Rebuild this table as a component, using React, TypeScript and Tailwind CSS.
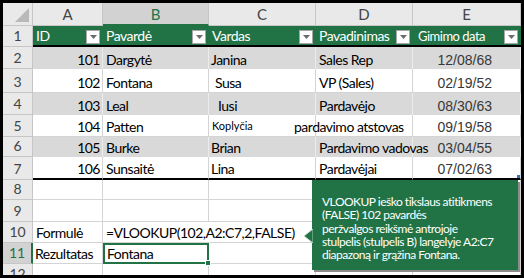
import React from 'react';

const cols = 'grid grid-cols-[30px_70px_106px_107px_97px_108px]';
const grid = 'border-r border-b border-[#d4d4d4]';

const Dropdown = () => (
  <span className="absolute right-[3px] top-[4px] flex h-[14px] w-[14px] items-center justify-center border border-[#a6a6a6] bg-white">
    <svg width="7" height="4" viewBox="0 0 7 4">
      <polygon points="0,0 7,0 3.5,4" fill="#6b6b6b" />
    </svg>
  </span>
);

const RowHead = ({ n, active }: { n: number; active?: boolean }) => (
  <div
    className={
      active
        ? 'flex items-end justify-center border-b border-r-2 border-b-[#c6c6c6] border-r-[#217346] bg-[#d2d2d2] pb-[2px] tracking-normal text-[#217346]'
        : 'flex items-end justify-center border-b border-r border-[#c6c6c6] bg-[#e9e9e9] pb-[2px] tracking-normal text-[#444]'
    }
  >
    {n}
  </div>
);

const people = [
  { id: 101, last: 'Dargytė', first: 'Janina', title: 'Sales Rep', date: '12/08/68', h: 'h-[22px]', cPad: 'pl-[2px]' },
  { id: 102, last: 'Fontana', first: 'Susa', title: 'VP (Sales)', date: '02/19/52', h: 'h-[24px]', cPad: 'pl-[6px]' },
  { id: 103, last: 'Leal', first: 'Iusi', title: 'Pardavėjo', date: '08/30/63', h: 'h-[22px]', cPad: 'pl-[9px]' },
  { id: 104, last: 'Patten', first: 'Koplyčia', title: 'pardavimo atstovas', date: '09/19/58', h: 'h-[22px]', cPad: 'pl-[3px]' },
  { id: 105, last: 'Burke', first: 'Brian', title: 'Pardavimo vadovas', date: '03/04/55', h: 'h-[20px]', cPad: 'pl-[2px]' },
  { id: 106, last: 'Sunsaitė', first: 'Lina', title: 'Pardavėjai', date: '07/02/63', h: 'h-[23px]', cPad: 'pl-[2px]' },
];

export default function App() {
  return (
    <div className="relative h-[278px] w-[524px] overflow-hidden border-[3px] border-black bg-white font-[Lato,'Liberation_Sans',sans-serif] text-[14px] leading-[16px] tracking-[-0.5px] text-black">
      {/* column letters */}
      <div className={`${cols} h-[23px]`}>
        <div className="relative border-b border-r border-[#c6c6c6] bg-[#e9e9e9]">
          <svg className="absolute bottom-[3px] right-[3px]" width="14" height="14" viewBox="0 0 14 14">
            <polygon points="14,0 14,14 0,14" fill="#b9b9b9" />
          </svg>
        </div>
        {['A', 'B', 'C', 'D', 'E'].map((c) => (
          <div
            key={c}
            className={
              c === 'B'
                ? 'flex items-center justify-center border-b-2 border-r border-b-[#217346] border-r-[#c6c6c6] bg-[#d2d2d2] text-[15px] tracking-normal text-[#217346]'
                : 'flex items-center justify-center border-b border-r border-[#c6c6c6] bg-[#e9e9e9] text-[15px] tracking-normal text-[#444]'
            }
          >
            {c}
          </div>
        ))}
      </div>

      {/* table header row */}
      <div className={`${cols} h-[21px]`}>
        <RowHead n={1} />
        {['ID', 'Pavardė', 'Vardas', 'Pavadinimas', 'Gimimo data'].map((t, i) => (
          <div
            key={t}
            className="relative flex items-end whitespace-nowrap border-b-2 border-b-black bg-[#217346] pb-[1px] pl-[3px] text-white"
          >
            <span className={i === 4 ? 'pl-[2px] text-[13px]' : ''}>{t}</span>
            <Dropdown />
          </div>
        ))}
      </div>

      {/* data rows */}
      {people.map((p, i) => {
        const band = i % 2 === 0 ? 'bg-[#d9d9d9] border-r border-[#ececec]' : `bg-white ${grid}`;
        const last = i === people.length - 1;
        const bottom = last ? 'border-b-2 border-b-black' : '';
        return (
          <div key={p.id} className={`${cols} ${p.h}`}>
            <RowHead n={i + 2} />
            <div className={`flex items-end justify-end whitespace-nowrap pb-[1px] pr-[2px] ${band} ${bottom}`}>{p.id}</div>
            <div className={`flex items-end whitespace-nowrap pb-[1px] pl-[3px] ${band} ${bottom}`}>{p.last}</div>
            <div className={`flex items-end whitespace-nowrap pb-[1px] ${p.cPad} ${band} ${bottom}`}>
              <span className={p.id === 104 ? 'pb-[1px] text-[11px] tracking-normal' : ''}>{p.first}</span>
            </div>
            <div className={`relative z-10 flex items-end whitespace-nowrap pb-[1px] pl-[3px] ${band} ${bottom}`}>
              <span className={p.id === 104 ? 'ml-[-25px]' : ''}>{p.title}</span>
            </div>
            <div
              className={`relative flex items-end justify-end whitespace-nowrap pb-[1px] pr-[28px] font-['Liberation_Sans',sans-serif] tracking-normal text-[#383838] ${band} ${bottom}`}
            >
              {p.date}
              {last && <span className="absolute bottom-0 right-0 h-[3px] w-[3px] bg-[#3c6fc2]" />}
            </div>
          </div>
        );
      })}

      {/* empty rows 8, 9 */}
      {[8, 9].map((n) => (
        <div key={n} className={`${cols} ${n === 8 ? 'h-[20px]' : 'h-[22px]'}`}>
          <RowHead n={n} />
          <div className={grid} />
          <div className={grid} />
          <div className={grid} />
          <div className={grid} />
          <div className={grid} />
        </div>
      ))}

      {/* formula row */}
      <div className={`${cols} h-[21px]`}>
        <RowHead n={10} />
        <div className={`flex items-end pb-[1px] pl-[3px] ${grid}`}>Formulė</div>
        <div className="relative z-10 flex items-end whitespace-nowrap border-b border-[#d4d4d4] pb-[1px] pl-[3px]">
          =VLOOKUP(102,A2:C7,2,FALSE)
        </div>
        <div className={grid} />
        <div className={grid} />
        <div className={grid} />
      </div>

      {/* result row */}
      <div className={`${cols} h-[21px]`}>
        <RowHead n={11} active />
        <div className={`flex items-end whitespace-nowrap pb-[1px] pl-[2px] ${grid}`}>Rezultatas</div>
        <div className="relative flex items-end border-2 border-[#217346] pb-0 pl-[2px]">
          Fontana
          <span className="absolute bottom-[-4px] right-[-4px] h-[6px] w-[6px] border border-white bg-[#217346]" />
        </div>
        <div className={grid} />
        <div className={grid} />
        <div className={grid} />
      </div>

      {/* row 12 (cut off) */}
      <div className={`${cols} h-[21px]`}>
        <RowHead n={12} />
        <div className={grid} />
        <div className={grid} />
        <div className={grid} />
        <div className={grid} />
        <div className={grid} />
      </div>

      {/* comment callout */}
      <div className="absolute left-[309px] top-[177px] z-20 h-[90px] w-[206px] bg-[#217346] pl-[10px] pt-[15px] text-[12px] leading-[13.3px] tracking-[-0.5px] text-white shadow-[2px_2px_0_#8c8c8c]">
        <svg className="absolute left-[-8px] top-[49px]" width="9" height="14" viewBox="0 0 9 14">
          <polygon points="9,0 0,7 9,14" fill="#217346" stroke="#cfe0d6" strokeWidth="0.8" />
        </svg>
        <p>VLOOKUP ieško tikslaus atitikmens</p>
        <p>(FALSE) 102 pavardės</p>
        <p>peržvalgos reikšmė antrojoje</p>
        <p>stulpelis (stulpelis B) langelyje A2:C7</p>
        <p>diapazoną ir grąžina Fontana.</p>
      </div>
    </div>
  );
}
